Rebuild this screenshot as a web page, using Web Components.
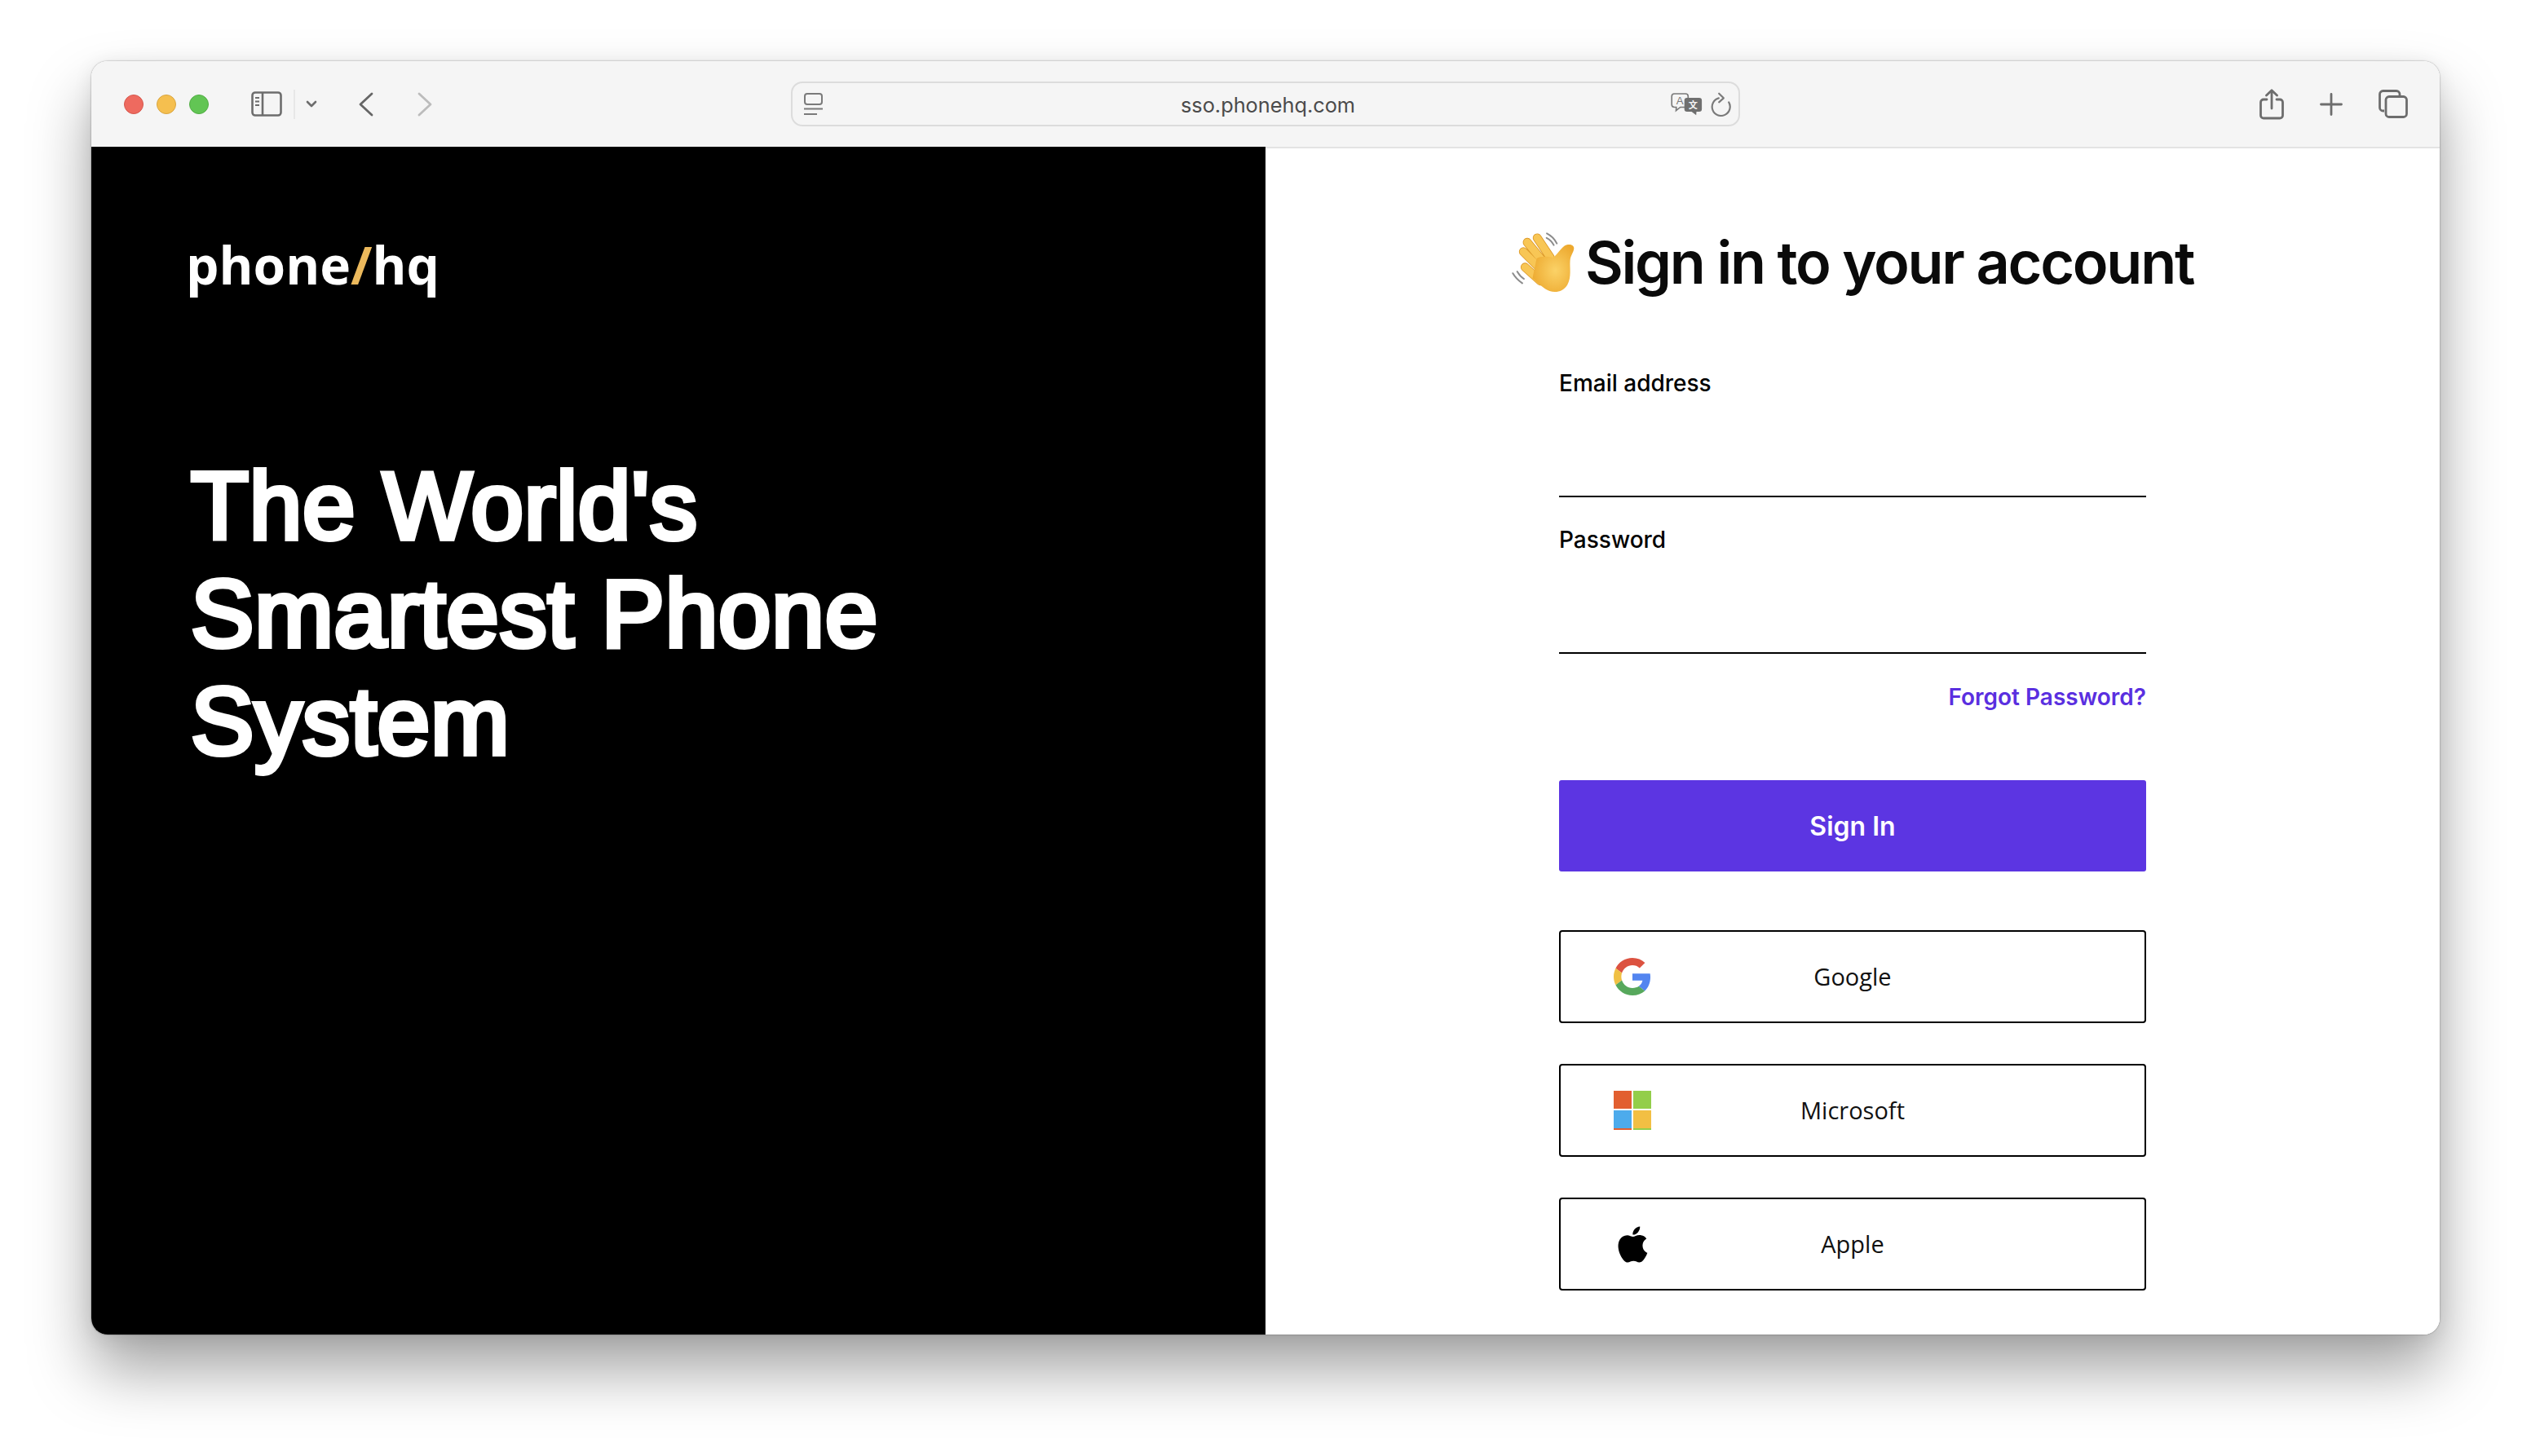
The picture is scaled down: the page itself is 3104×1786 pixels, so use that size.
<!DOCTYPE html>
<html>
<head>
<meta charset="utf-8">
<title>phone/hq</title>
<style>
  html, body { margin: 0; padding: 0; background: #fff; }
  body { width: 3104px; height: 1786px; overflow: hidden; font-family: "Inter", "Liberation Sans", sans-serif; }
</style>
</head>
<body>
<mac-window>
  <safari-toolbar slot="toolbar" url="sso.phonehq.com"></safari-toolbar>
  <brand-panel slot="left"></brand-panel>
  <sign-in-panel slot="right"></sign-in-panel>
</mac-window>

<script>
class MacWindow extends HTMLElement {
  constructor() {
    super();
    this._root = this.attachShadow({ mode: "open" });
  }
  connectedCallback() {
    this._root.innerHTML = `
    <style>
      :host { display: block; width: 2880px; height: 1562px; margin: 75px 0 0 112px; border-radius: 20px;
        box-shadow: 0 0 2px rgba(0,0,0,.45), 0 44px 76px rgba(0,0,0,.36), 0 4px 24px rgba(0,0,0,.08); }
      .frame { width: 100%; height: 100%; border-radius: 20px; overflow: hidden; display: flex; flex-direction: column; background: #fff; }
      .split { flex: 1; display: grid; grid-template-columns: 1440px 1440px; min-height: 0; }
    </style>
    <div class="frame">
      <slot name="toolbar"></slot>
      <div class="split">
        <slot name="left"></slot>
        <slot name="right"></slot>
      </div>
    </div>`;
  }
}

class SafariToolbar extends HTMLElement {
  constructor() {
    super();
    this._root = this.attachShadow({ mode: "open" });
  }
  connectedCallback() {
    const url = this.getAttribute("url");
    this._root.innerHTML = `
    <style>
      :host { display: grid; grid-template-columns: 1fr 1164px 1fr; align-items: center; height: 105px; box-sizing: border-box;
        background: #f5f5f5; }
      .left, .right { display: flex; align-items: center; }
      .left { padding-left: 40px; }
      .right { justify-content: flex-end; padding-right: 39px; }
      .lights { display: flex; gap: 16px; }
      .lights i { display: block; width: 24px; height: 24px; border-radius: 50%; box-sizing: border-box; border: 1px solid; }
      .red { background: #ee6a5f; border-color: #d6574d !important; }
      .yellow { background: #f5bf4f; border-color: #d9a53f !important; }
      .green { background: #62c554; border-color: #52ad45 !important; }
      svg { display: block; flex: none; fill: none; }
      .sidebar { margin-left: 52px; }
      .sep { width: 2px; height: 36px; background: #e7e7e7; margin-left: 14px; }
      .chev { margin-left: 13px; }
      .back { margin-left: 51px; }
      .fwd { margin-left: 54px; }
      .addr { height: 55px; box-sizing: border-box; border: 2px solid #dcdcdc; border-radius: 14px;
        display: grid; grid-template-columns: 1fr auto 1fr; align-items: center; padding: 0 8px 0 14px; }
      .url { font: 400 25.300px "Inter", "Liberation Sans", sans-serif; color: #4b4b4b; padding-top: 1px; }
      .tools { display: flex; align-items: center; justify-content: flex-end; gap: 9px; }
      .plus, .tabs { margin-left: 44px; }
    </style>
    <div class="left">
      <div class="lights"><i class="red"></i><i class="yellow"></i><i class="green"></i></div>
      <svg class="sidebar" width="38" height="31" viewBox="0 0 38 31" stroke="#6d6d6d" stroke-width="2.600">
        <rect x="1.500" y="1.500" width="35" height="28" rx="3.500"/>
        <path d="M14 1.500v28"/>
        <path d="M5 8h5M5 12.500h5M5 17h5" stroke-width="1.800"/>
      </svg>
      <div class="sep"></div>
      <svg class="chev" width="14" height="10" viewBox="0 0 14 10" stroke="#6d6d6d" stroke-width="2.600" stroke-linecap="round" stroke-linejoin="round">
        <path d="M2 2l5 5 5-5"/>
      </svg>
      <svg class="back" width="18" height="30" viewBox="0 0 18 30" stroke="#666" stroke-width="2.800" stroke-linecap="round" stroke-linejoin="round">
        <path d="M16 2L2 15l14 13"/>
      </svg>
      <svg class="fwd" width="18" height="30" viewBox="0 0 18 30" stroke="#bcbcbc" stroke-width="2.800" stroke-linecap="round" stroke-linejoin="round">
        <path d="M2 2l14 13L2 28"/>
      </svg>
    </div>

    <div class="addr">
      <svg width="23" height="28" viewBox="0 0 23 28" stroke="#7a7a7a" stroke-width="2">
        <rect x="1" y="1" width="21" height="13" rx="3"/>
        <path d="M0 19.500h23M0 26h16"/>
      </svg>
      <span class="url">${url}</span>
      <div class="tools">
        <svg width="39" height="28" viewBox="53 60 117 85">
          <path d="M66 63h41a10 10 0 0 1 10 10v30a10 10 0 0 1-10 10H88l-16 13 1-13h-7a10 10 0 0 1-10-10V73a10 10 0 0 1 10-10z" stroke="#7a7a7a" stroke-width="5" fill="#f5f5f5"/>
          <text x="86" y="101" text-anchor="middle" font-family="Liberation Sans" font-size="40" fill="#7a7a7a">A</text>
          <path d="M113 78h45a10 10 0 0 1 10 10v32a10 10 0 0 1-10 10h-10l-1 13-17-13h-17a10 10 0 0 1-10-10V88a10 10 0 0 1 10-10z" fill="#6f6f6f"/>
          <text x="135" y="117" text-anchor="middle" font-family="Noto Sans CJK SC" font-size="34" font-weight="700" fill="#f5f5f5">文</text>
        </svg>
        <svg width="27" height="30" viewBox="200 55 80 90" stroke="#7a7a7a" stroke-width="6.500" stroke-linecap="round" stroke-linejoin="round">
          <path d="M232 77A33 33 0 1 0 269 92"/>
          <path d="M233 60l17 17-17 15"/>
        </svg>
      </div>
    </div>

    <div class="right">
      <svg class="share" width="30" height="38" viewBox="0 0 30 38" stroke="#6d6d6d" stroke-width="2.800" stroke-linecap="round" stroke-linejoin="round">
        <path d="M9 13H5a3.500 3.500 0 0 0-3.500 3.500v16A3.500 3.500 0 0 0 5 36h20a3.500 3.500 0 0 0 3.500-3.500v-16A3.500 3.500 0 0 0 25 13h-4"/>
        <path d="M15 24V2M8.500 8L15 1.700 21.500 8"/>
      </svg>
      <svg class="plus" width="28" height="28" viewBox="0 0 28 28" stroke="#6d6d6d" stroke-width="2.800" stroke-linecap="round">
        <path d="M14 1.500v25M1.500 14h25"/>
      </svg>
      <svg class="tabs" width="36" height="35" viewBox="0 0 36 35" stroke="#6d6d6d" stroke-width="2.800" stroke-linejoin="round">
        <path d="M7 26H5.500A4 4 0 0 1 1.500 22V5.500a4 4 0 0 1 4-4H22a4 4 0 0 1 4 4V7"/>
        <rect x="9" y="8.500" width="25.500" height="25" rx="4"/>
      </svg>
    </div>`;
  }
}

class BrandPanel extends HTMLElement {
  constructor() {
    super();
    this._root = this.attachShadow({ mode: "open" });
  }
  connectedCallback() {
    this._root.innerHTML = `
    <style>
      :host { display: block; background: #000; color: #fff; height: 100%; padding: 101px 0 0 116px; box-sizing: border-box; }
      .logo { font: 700 64px/88px "Open Sans", "Noto Sans", sans-serif; margin: 0; }
      .logo span { color: #ecb95c; }
      /* no medium cut of this face, so regular plus a stroke gets the weight */
      h1 { margin: 186px 0 0 6px; font: 400 116px/132px "Liberation Sans", sans-serif; letter-spacing: .8px; -webkit-text-stroke: 6px #fff; }
    </style>
    <div class="logo">phone<span>/</span>hq</div>
    <h1>The World's<br>Smartest Phone<br>System</h1>`;
  }
}

class TextField extends HTMLElement {
  constructor() {
    super();
    this._root = this.attachShadow({ mode: "open" });
  }
  connectedCallback() {
    this._root.innerHTML = `
    <style>
      :host { display: block; height: 192px; }
      label { display: block; font: 500 28px/36px "Inter", "Liberation Sans", sans-serif; color: #000; }
      .line { height: 120px; border-bottom: 2px solid #000; }
    </style>
    <label><slot></slot></label>
    <div class="line"></div>`;
  }
}

class SsoButton extends HTMLElement {
  constructor() {
    super();
    this._root = this.attachShadow({ mode: "open" });
  }
  connectedCallback() {
    this._root.innerHTML = `
    <style>
      :host { display: grid; grid-template-columns: 1fr auto 1fr; align-items: center; height: 114px; box-sizing: border-box;
        border: 2px solid #000; border-radius: 4px; background: #fff; }
      .icon { display: flex; width: 46px; height: 48px; margin-left: 65px; align-items: center; justify-content: center; }
      .text { font: 500 29px "Open Sans", "Noto Sans", sans-serif; color: #111; padding-bottom: 2px; }
    </style>
    <div class="icon"><slot name="icon"></slot></div>
    <div class="text"><slot></slot></div>
    <div></div>`;
  }
}

class SignInPanel extends HTMLElement {
  constructor() {
    super();
    this._root = this.attachShadow({ mode: "open" });
  }
  connectedCallback() {
    this._root.innerHTML = `
    <style>
      :host { display: block; background: #fff; height: 100%; box-sizing: border-box; border-top: 2px solid #e3e3e3; padding-top: 90px; }
      .head { display: flex; justify-content: center; align-items: center; gap: 12px; height: 100px; }
      h2 { margin: 0; font: 600 72px/100px "Inter", "Liberation Sans", sans-serif; letter-spacing: -2.300px; color: #0a0a0a; }
      .form { width: 720px; margin: 80px auto 0; }
      .forgot { font: 600 28px/36px "Inter", "Liberation Sans", sans-serif; color: #5a2fe0; text-align: right; margin-top: 1px; }
      .submit { height: 112px; margin-top: 84px; background: #5c35e2; color: #fff; border-radius: 3px; display: flex; align-items: center; justify-content: center;
        font: 600 32px "Inter", "Liberation Sans", sans-serif; }
      sso-button { margin-top: 50px; }
      .first { margin-top: 72px; }
      svg { display: block; flex: none; }
    </style>
    <div class="head">
      <svg width="78" height="78" viewBox="70 50 230 230">
        <defs>
          <radialGradient id="skin" cx="55%" cy="55%" r="60%">
            <stop offset="0" stop-color="#fbd267"/><stop offset="1" stop-color="#eda92f"/>
          </radialGradient>
        </defs>
        <path d="M197 60c16 8 28 20 36 36M196 76c12 6 20 14 26 26" fill="none" stroke="#8c8c8c" stroke-width="6" stroke-linecap="round"/>
        <path d="M74 204c8 14 20 26 34 36M90 198c6 10 14 20 24 26" fill="none" stroke="#8c8c8c" stroke-width="6" stroke-linecap="round"/>
        <path d="M118 182l56 50M112 126l66 66M126 92l64 78M162 76l48 72" stroke="#dd9a2a" stroke-width="32" stroke-linecap="round" fill="none"/>
        <path d="M118 182l56 50M112 126l66 66M126 92l64 78M162 76l48 72" stroke="#f8c655" stroke-width="27" stroke-linecap="round" fill="none"/>
        <path d="M160 150c12-8 40-8 60-3 14-10 24-30 42-43 14-8 34-4 33 10-2 16-12 24-14 44-2 26 6 58-10 88-14 24-42 30-64 22-22-8-42-28-62-46z" fill="url(#skin)"/>
      </svg>
      <h2>Sign in to your account</h2>
    </div>
    <div class="form">
      <text-field>Email address</text-field>
      <text-field>Password</text-field>
      <div class="forgot">Forgot Password?</div>
      <div class="submit">Sign In</div>
      <sso-button class="first">
        <svg slot="icon" width="46" height="48" viewBox="0 0 48 48">
          <path fill="#dc5240" d="M24 9.500c3.540 0 6.710 1.220 9.210 3.600l6.850-6.850C35.900 2.380 30.470 0 24 0 14.620 0 6.510 5.380 2.560 13.220l7.980 6.190C12.430 13.720 17.740 9.500 24 9.500z"/>
          <path fill="#5385f0" d="M46.980 24.550c0-1.570-.15-3.090-.38-4.550H24v9.020h12.940c-.58 2.960-2.260 5.480-4.780 7.180l7.730 6c4.510-4.180 7.090-10.360 7.090-17.650z"/>
          <path fill="#f0c044" d="M10.530 28.590c-.48-1.450-.76-2.990-.76-4.590s.27-3.140.76-4.590l-7.980-6.190C.92 16.460 0 20.120 0 24c0 3.880.92 7.540 2.560 10.780l7.970-6.190z"/>
          <path fill="#57a85c" d="M24 48c6.480 0 11.930-2.130 15.890-5.810l-7.730-6c-2.150 1.450-4.920 2.300-8.160 2.300-6.260 0-11.570-4.220-13.470-9.910l-7.980 6.190C6.510 42.620 14.620 48 24 48z"/>
        </svg>
        Google
      </sso-button>
      <sso-button>
        <svg slot="icon" width="46" height="48" viewBox="0 0 46 48">
          <rect width="22" height="22" fill="#e25f30"/><rect x="24" width="22" height="22" fill="#93ce4a"/>
          <rect y="24" width="22" height="22" fill="#4dabec"/><rect x="24" y="24" width="22" height="22" fill="#f2bf43"/>
          <rect y="46" width="22" height="2" fill="#e25f30"/><rect x="24" y="46" width="22" height="2" fill="#93ce4a"/>
        </svg>
        Microsoft
      </sso-button>
      <sso-button>
        <svg slot="icon" width="53" height="53" viewBox="0 0 24 24" style="flex:none">
          <path d="M18.710 19.500c-.83 1.240-1.710 2.450-3.050 2.470-1.340.03-1.770-.79-3.290-.79-1.530 0-2 .77-3.270.82-1.310.05-2.300-1.320-3.140-2.530C4.250 17 2.940 12.450 4.700 9.390c.87-1.520 2.430-2.480 4.120-2.510 1.280-.02 2.500.87 3.290.87.78 0 2.260-1.070 3.810-.91.65.03 2.470.26 3.640 1.980-.09.06-2.170 1.280-2.150 3.810.03 3.020 2.650 4.030 2.680 4.040-.03.07-.42 1.440-1.380 2.830M13 3.500c.73-.83 1.940-1.460 2.940-1.500.13 1.170-.34 2.350-1.040 3.190-.69.85-1.830 1.510-2.950 1.420-.15-1.150.41-2.350 1.050-3.110z"/>
        </svg>
        Apple
      </sso-button>
    </div>`;
  }
}

window.customElements.define("mac-window", MacWindow);
window.customElements.define("safari-toolbar", SafariToolbar);
window.customElements.define("brand-panel", BrandPanel);
window.customElements.define("text-field", TextField);
window.customElements.define("sso-button", SsoButton);
window.customElements.define("sign-in-panel", SignInPanel);
</script>
</body>
</html>
